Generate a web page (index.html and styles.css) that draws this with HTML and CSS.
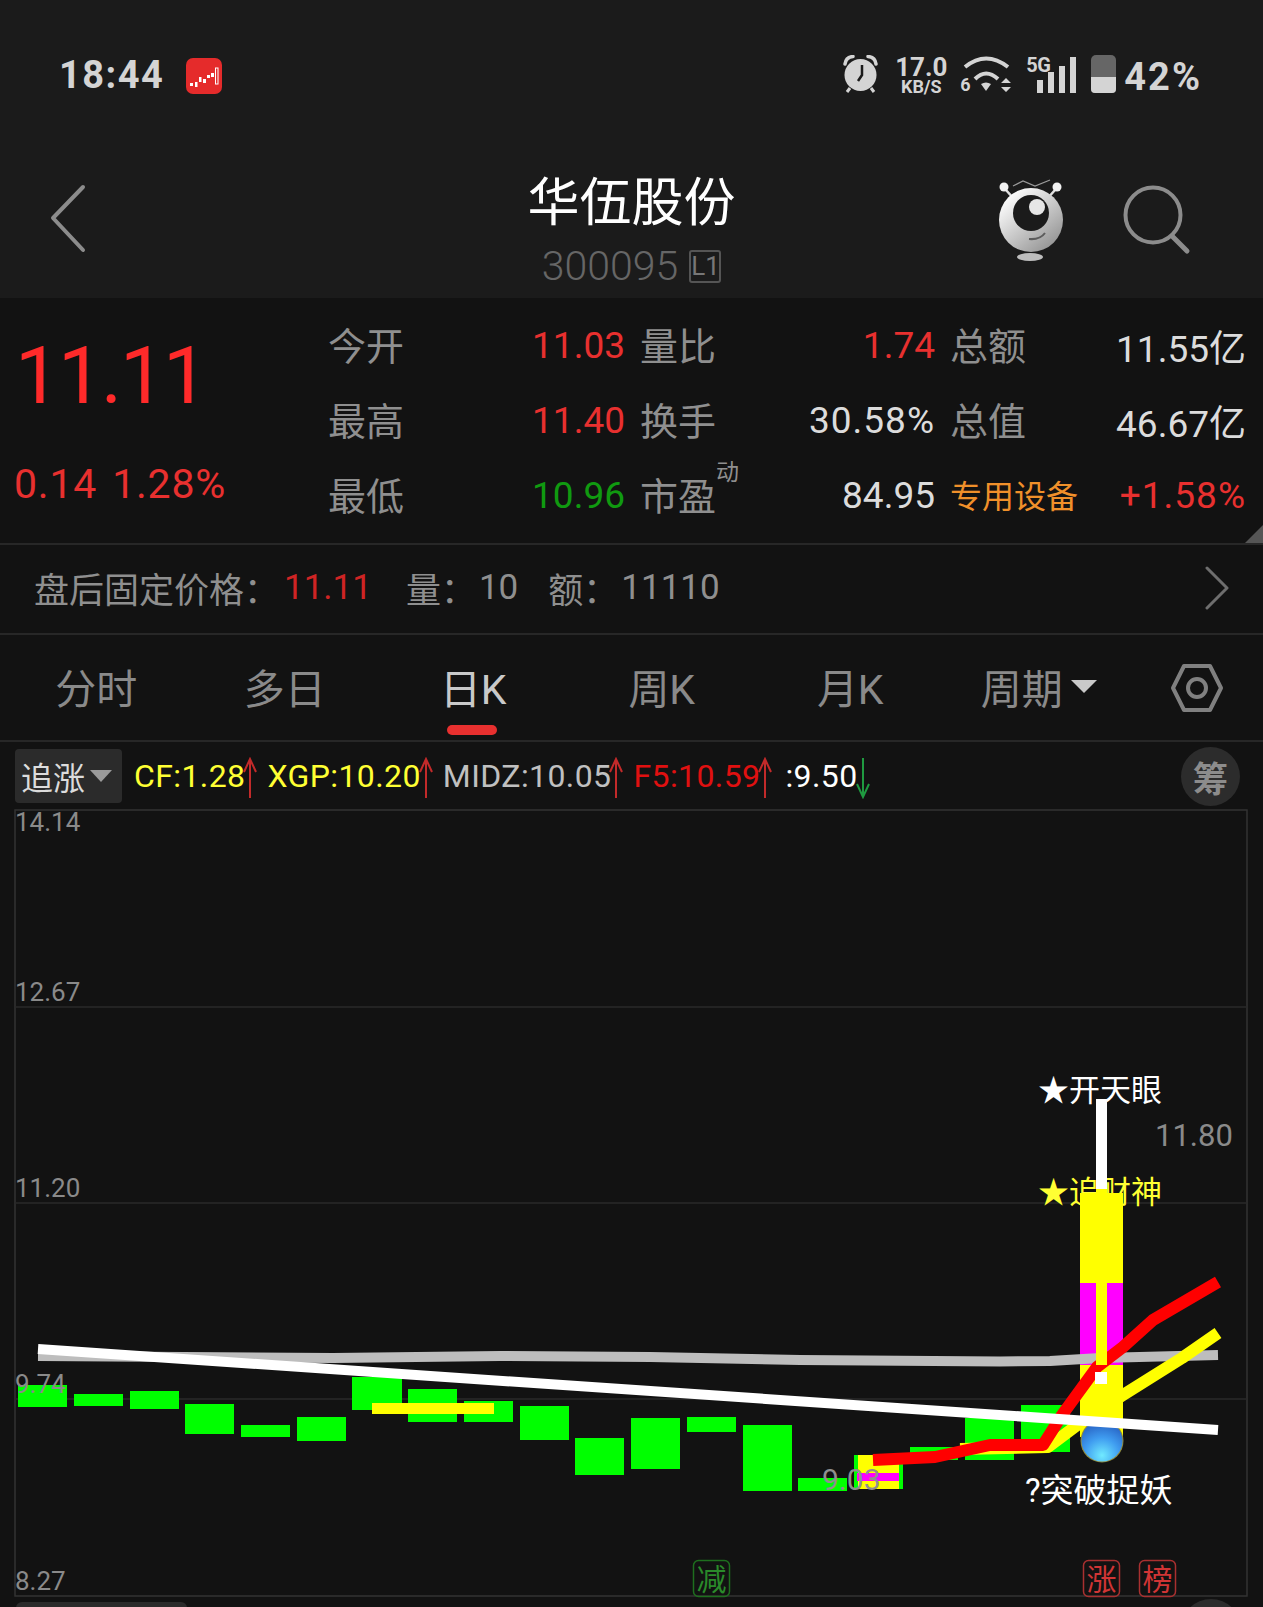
FILE: index.html
```html
<!DOCTYPE html>
<html lang="zh-CN">
<head>
  <meta charset="UTF-8">
  <title>华伍股份</title>
  <link rel="stylesheet" href="styles.css">
</head>
<body>

<header class="top">
  <div class="status">
    <div class="status-left">
      <span class="clock">18:44</span>
      <svg class="app-icon" width="36" height="36" viewBox="0 0 36 36">
        <rect width="36" height="36" rx="7" fill="#e52b2b"/>
        <g fill="#fff">
          <rect x="4" y="25" width="3" height="3"/>
          <rect x="9" y="24" width="2.5" height="5"/>
          <rect x="13" y="19" width="2.5" height="5"/>
          <rect x="17" y="21" width="3" height="4"/>
          <rect x="21" y="17" width="3" height="3"/>
          <rect x="25" y="15" width="3" height="4"/>
        </g>
        <rect x="29.5" y="10" width="2.5" height="16" fill="none" stroke="#fff" stroke-width="1"/>
      </svg>
    </div>
    <div class="status-right">
      <svg width="38" height="38" viewBox="0 0 38 38">
        <circle cx="18.500" cy="20" r="16" fill="#d4d4d4"/>
        <path d="M3 9 Q4 2 11 1.500 M34 9 Q33 2 26 1.500" fill="none" stroke="#d4d4d4" stroke-width="3.500" stroke-linecap="round"/>
        <path d="M8 33 L5 37 M29 33 L32 37" stroke="#d4d4d4" stroke-width="3"/>
        <path d="M20 10 V20 L16 26" fill="none" stroke="#1b1b1b" stroke-width="2.500"/>
      </svg>
      <div class="speed">
        <span class="speed-num">17.0</span>
        <span class="speed-unit">KB/S</span>
      </div>
      <div class="wifi">
        <svg width="54" height="38" viewBox="0 0 54 38">
          <path d="M6 12 Q27 -5 49 12" fill="none" stroke="#d4d4d4" stroke-width="4"/>
          <path d="M16 24 Q27 13 39 24" fill="none" stroke="#d4d4d4" stroke-width="4"/>
          <path d="M22 29 Q27 26 32 29 L27 36 Z" fill="#d4d4d4"/>
          <path d="M47 23 L52 28 H42 Z M42 32 H52 L47 37 Z" fill="#d4d4d4"/>
        </svg>
        <span class="wifi-gen">6</span>
      </div>
      <div class="signal">
        <span class="signal-gen">5G</span>
        <i class="bar bar-1"></i>
        <i class="bar bar-2"></i>
        <i class="bar bar-3"></i>
        <i class="bar bar-4"></i>
      </div>
      <div class="battery"><div class="battery-fill"></div></div>
      <span class="battery-pct">42%</span>
    </div>
  </div>

  <div class="nav">
    <svg class="back" width="40" height="70" viewBox="0 0 40 70">
      <path d="M34 3 L4 34 L34 66" fill="none" stroke="#8c8c8c" stroke-width="4" stroke-linecap="round" stroke-linejoin="round"/>
    </svg>
    <div class="title">
      <h1>华伍股份</h1>
      <div class="code"><span>300095</span><span class="level">L1</span></div>
    </div>
    <div class="nav-right">
      <svg width="70" height="84" viewBox="0 0 70 84">
        <defs>
          <linearGradient id="bot" x1="0.150" y1="0.100" x2="0.850" y2="0.950">
            <stop offset="0" stop-color="#ffffff"/>
            <stop offset="1" stop-color="#929292"/>
          </linearGradient>
        </defs>
        <path d="M11 12 L19 21 M60 12 L52 21" stroke="#e0e0e0" stroke-width="2.500"/>
        <circle cx="9" cy="9" r="4.500" fill="#f2f2f2"/>
        <circle cx="62" cy="9" r="4.500" fill="#f2f2f2"/>
        <path d="M18 8 L28 3 L40 8 L55 2" fill="none" stroke="#9a9a9a" stroke-width="1.300"/>
        <circle cx="36" cy="42" r="32" fill="url(#bot)"/>
        <circle cx="36" cy="35" r="18" fill="#1b1b1b"/>
        <circle cx="42" cy="29" r="8" fill="#e6e6e6"/>
        <path d="M34 61 Q45 62 50 55" fill="none" stroke="#5c5c5c" stroke-width="2"/>
        <ellipse cx="35" cy="79" rx="13" ry="4" fill="#bdbdbd"/>
      </svg>
      <svg class="search" width="70" height="76" viewBox="0 0 70 76">
        <circle cx="31" cy="31" r="27.500" fill="none" stroke="#8c8c8c" stroke-width="4"/>
        <path d="M50 52 L65 67" stroke="#8c8c8c" stroke-width="5" stroke-linecap="round"/>
      </svg>
    </div>
  </div>
</header>

<section class="quote">
  <div class="price">
    <div class="price-now">11.11</div>
    <div class="price-change"><span>0.14</span><span>1.28%</span></div>
  </div>
  <div class="stats">
    <div class="stat"><span class="lbl">今开</span><span class="up">11.03</span></div>
    <div class="stat"><span class="lbl">量比</span><span class="up">1.74</span></div>
    <div class="stat stat-last"><span class="lbl">总额</span><span class="val">11.55亿</span></div>
    <div class="stat"><span class="lbl">最高</span><span class="up">11.40</span></div>
    <div class="stat"><span class="lbl">换手</span><span class="val pct">30.58%</span></div>
    <div class="stat stat-last"><span class="lbl">总值</span><span class="val">46.67亿</span></div>
    <div class="stat"><span class="lbl">最低</span><span class="down">10.96</span></div>
    <div class="stat"><span class="lbl">市盈<sup class="dyn">动</sup></span><span class="val">84.95</span></div>
    <div class="stat stat-last"><span class="sector">专用设备</span><span class="up pct">+1.58%</span></div>
  </div>
  <div class="corner"></div>
</section>

<section class="after">
  <span class="after-lbl">盘后固定价格：</span><span class="after-price">11.11</span>
  <span class="after-lbl after-vol">量：</span><span class="after-num">10</span>
  <span class="after-lbl after-amt">额：</span><span class="after-num">11110</span>
  <svg class="after-go" width="26" height="44" viewBox="0 0 26 44">
    <path d="M3 2 L23 22 L3 42" fill="none" stroke="#6e6e6e" stroke-width="3" stroke-linecap="round" stroke-linejoin="round"/>
  </svg>
</section>

<nav class="tabs">
  <div class="tab">分时</div>
  <div class="tab">多日</div>
  <div class="tab active">日K</div>
  <div class="tab">周K</div>
  <div class="tab">月K</div>
  <div class="tab">周期<i class="caret"></i></div>
  <svg class="gear" width="54" height="50" viewBox="0 0 54 50">
    <path d="M14 3 H40 L51 25 L40 47 H14 L3 25 Z" fill="none" stroke="#808080" stroke-width="4" stroke-linejoin="round"/>
    <circle cx="27" cy="25" r="9" fill="none" stroke="#808080" stroke-width="4"/>
  </svg>
</nav>

<div class="indicators">
  <div class="picker">追涨<i class="picker-caret"></i></div>
  <span class="ind yellow">CF:1.28</span>
  <svg class="arrow" width="14" height="42" viewBox="0 0 14 42"><path d="M7 41 V2 M1 15 L7 2 L13 15" fill="none" stroke="#c22a2a" stroke-width="2"/></svg>
  <span class="ind yellow">XGP:10.20</span>
  <svg class="arrow" width="14" height="42" viewBox="0 0 14 42"><path d="M7 41 V2 M1 15 L7 2 L13 15" fill="none" stroke="#c22a2a" stroke-width="2"/></svg>
  <span class="ind silver">MIDZ:10.05</span>
  <svg class="arrow" width="14" height="42" viewBox="0 0 14 42"><path d="M7 41 V2 M1 15 L7 2 L13 15" fill="none" stroke="#c22a2a" stroke-width="2"/></svg>
  <span class="ind red">F5:10.59</span>
  <svg class="arrow" width="14" height="42" viewBox="0 0 14 42"><path d="M7 41 V2 M1 15 L7 2 L13 15" fill="none" stroke="#c22a2a" stroke-width="2"/></svg>
  <span class="ind white">:9.50</span>
  <svg class="arrow" width="14" height="42" viewBox="0 0 14 42"><path d="M7 1 V40 M1 27 L7 40 L13 27" fill="none" stroke="#1f9a40" stroke-width="2"/></svg>
  <div class="chips">筹</div>
</div>

<svg class="chart" width="1263" height="807" viewBox="0 800 1263 807">
  <defs>
    <radialGradient id="orb" cx="0.500" cy="0.850" r="0.850">
      <stop offset="0" stop-color="#70eaff"/>
      <stop offset="0.500" stop-color="#3f9cf0"/>
      <stop offset="0.900" stop-color="#2a68c8"/>
      <stop offset="1" stop-color="#1f4f98"/>
    </radialGradient>
  </defs>

  <!-- frame and price grid -->
  <rect class="frame" x="15" y="810" width="1232" height="786"/>
  <path class="grid" d="M15 1007 H1247 M15 1203 H1247 M15 1399 H1247"/>

  <!-- falling days -->
  <g class="candle">
    <rect x="18" y="1385" width="49" height="22"/>
    <rect x="74" y="1394" width="49" height="12"/>
    <rect x="130" y="1391" width="49" height="18"/>
    <rect x="185" y="1404" width="49" height="30"/>
    <rect x="241" y="1425" width="49" height="12"/>
    <rect x="297" y="1417" width="49" height="24"/>
    <rect x="352" y="1377" width="50" height="33"/>
    <rect x="408" y="1389" width="49" height="33"/>
    <rect x="464" y="1401" width="49" height="21"/>
    <rect x="520" y="1406" width="49" height="34"/>
    <rect x="575" y="1438" width="49" height="37"/>
    <rect x="631" y="1418" width="49" height="51"/>
    <rect x="687" y="1417" width="49" height="15"/>
    <rect x="743" y="1425" width="49" height="66"/>
    <rect x="798" y="1478" width="49" height="13"/>
    <rect x="854" y="1455" width="49" height="34"/>
    <rect x="910" y="1447" width="48" height="13"/>
    <rect x="965" y="1418" width="49" height="42"/>
    <rect x="1021" y="1405" width="49" height="47"/>
  </g>
  <rect class="fill-yellow" x="858" y="1455" width="41" height="34"/>
  <rect class="fill-pink" x="857" y="1473" width="42" height="8"/>
  <path class="seg-yellow" d="M372 1408.500 H494"/>

  <text class="tag tag-white" x="1038" y="1101">★开天眼</text>
  <text class="tag tag-yellow" x="1038" y="1203">★追财神</text>

  <!-- limit-up day -->
  <rect class="wick" x="1096" y="1099" width="11" height="90"/>
  <rect class="fill-yellow" x="1080" y="1193" width="43" height="244"/>
  <rect class="fill-pink" x="1080" y="1283" width="43" height="82"/>

  <polyline class="ma ma-gray" points="38,1356 333,1358 500,1356 650,1357 800,1360 1000,1361.500 1050,1361 1100,1358 1218,1355"/>
  <polyline class="ma ma-yellow" points="960,1449 1048,1447 1080,1423 1123,1395 1182,1358 1218,1333"/>
  <polyline class="ma ma-red" points="873,1460 935,1457 990,1445 1043,1445 1062,1415 1097,1367 1123,1347 1153,1320 1218,1282"/>

  <rect class="fill-yellow" x="1096" y="1189" width="11" height="176"/>
  <rect class="wick" x="1095" y="1372" width="12" height="12"/>

  <circle cx="1102" cy="1441" r="21.500" fill="#8f8a3c"/>
  <circle cx="1102" cy="1441" r="20.500" fill="url(#orb)"/>
  <line class="ma ma-white" x1="38" y1="1349" x2="1218" y2="1430"/>

  <!-- axis prices sit on top of the candles -->
  <text class="axis" x="15" y="831">14.14</text>
  <text class="axis" x="15" y="1001">12.67</text>
  <text class="axis" x="15" y="1197">11.20</text>
  <text class="axis" x="15" y="1393">9.74</text>
  <text class="axis" x="15" y="1590">8.27</text>
  <text class="axis axis-high" x="1155" y="1146">11.80</text>
  <text class="axis axis-low" x="822" y="1490">9.03</text>

  <text class="tag tag-wide" x="1025" y="1502">?突破捉妖</text>

  <g class="badge badge-green">
    <rect x="693.500" y="1560.500" width="36" height="36" rx="5"/>
    <text x="711.500" y="1590">减</text>
  </g>
  <g class="badge badge-red">
    <rect x="1083.500" y="1560.500" width="36" height="36" rx="5"/>
    <text x="1101.500" y="1590">涨</text>
  </g>
  <g class="badge badge-red">
    <rect x="1139.500" y="1560.500" width="36" height="36" rx="5"/>
    <text x="1157.500" y="1590">榜</text>
  </g>

  <!-- next strip starts below the fold -->
  <rect x="16" y="1602" width="171" height="30" rx="6" fill="#2b2b2b"/>
  <circle cx="1211" cy="1629" r="30" fill="#2c2c2c"/>
</svg>

</body>
</html>
```

FILE: styles.css
```css
:root {
  --bar: #1b1b1b;
  --bg: #121212;
  --line: #272727;
  --label: #8f8f8f;
  --value: #dcdcdc;
  --up: #e8302f;
  --down: #109a10;
}

* {
  margin: 0;
  padding: 0;
  box-sizing: border-box;
}

body {
  width: 1263px;
  height: 1607px;
  overflow: hidden;
  background: var(--bg);
  color: var(--value);
  font-family: Roboto, "Noto Sans CJK SC", sans-serif;
}

/* status bar + title bar */
.top {
  height: 298px;
  background: var(--bar);
}

.status {
  height: 130px;
  padding: 55px 61px 0 59px;
  display: flex;
  justify-content: space-between;
  align-items: flex-start;
  color: #d4d4d4;
}

.status-left {
  display: flex;
  align-items: center;
  gap: 22px;
}

.clock {
  font-size: 38px;
  font-weight: 700;
  line-height: 40px;
  letter-spacing: 1.5px;
}

.app-icon {
  margin-top: 2px;
}

.status-right {
  display: flex;
  align-items: flex-start;
}

.speed {
  margin-left: 15px;
  width: 52px;
  display: flex;
  flex-direction: column;
  align-items: center;
  font-weight: 700;
}

.speed-num {
  font-size: 26px;
  line-height: 24px;
}

.speed-unit {
  font-size: 18px;
  line-height: 15px;
}

.wifi {
  position: relative;
  margin-left: 12px;
  width: 54px;
}

.wifi-gen {
  position: absolute;
  left: 1px;
  top: 19px;
  font-size: 18px;
  font-weight: 700;
}

.signal {
  position: relative;
  margin-left: 13px;
  width: 50px;
  height: 38px;
  display: flex;
  align-items: flex-end;
  justify-content: flex-end;
  gap: 5px;
}

.signal-gen {
  position: absolute;
  left: 0;
  top: 0;
  font-size: 20px;
  line-height: 20px;
  font-weight: 700;
  letter-spacing: -0.5px;
}

.bar {
  width: 6px;
  background: #d4d4d4;
}

.bar-1 { height: 13px; }
.bar-2 { height: 21px; }
.bar-3 { height: 27px; }
.bar-4 { height: 36px; }

.battery {
  margin-left: 15px;
  width: 25px;
  height: 38px;
  background: #666;
  border-radius: 5px 5px 4px 4px;
  display: flex;
  align-items: flex-end;
  overflow: hidden;
}

.battery-fill {
  width: 100%;
  height: 16px;
  background: #d4d4d4;
}

.battery-pct {
  margin-left: 8px;
  margin-top: 2px;
  font-size: 38px;
  font-weight: 700;
  line-height: 40px;
  letter-spacing: 2px;
}

.nav {
  height: 168px;
  display: grid;
  grid-template-columns: 1fr auto 1fr;
  align-items: start;
}

.back {
  margin: 54px 0 0 49px;
}

.title {
  text-align: center;
}

.title h1 {
  font-size: 52px;
  font-weight: 400;
  line-height: 70px;
  margin-top: 39px;
  color: #fff;
}

.code {
  display: flex;
  justify-content: center;
  align-items: center;
  gap: 11px;
  font-size: 41px;
  line-height: 42px;
  font-weight: 300;
  color: #666;
  margin-top: 6px;
}

.level {
  width: 32px;
  height: 33px;
  border: 2px solid #555;
  border-radius: 3px;
  font-size: 26px;
  line-height: 29px;
  font-weight: 400;
  color: #777;
}

.nav-right {
  display: flex;
  justify-content: flex-end;
  align-items: flex-start;
  gap: 57px;
  padding-right: 71px;
  margin-top: 48px;
}

.search {
  margin-top: 6px;
}

/* quote block */
.quote {
  position: relative;
  height: 245px;
  display: flex;
}

.price {
  width: 328px;
  flex: none;
}

.price-now {
  font-size: 80px;
  line-height: 94px;
  margin: 31px 0 0 15px;
  letter-spacing: -2px;
  color: #ff2a2a;
}

.price-change {
  display: flex;
  gap: 15px;
  margin: 38px 0 0 14px;
  font-size: 41px;
  line-height: 46px;
  letter-spacing: 0.8px;
  color: var(--up);
}

.stats {
  flex: 1;
  padding-top: 8px;
  display: grid;
  grid-template-columns: 312px 310px 296px;
  grid-auto-rows: 75px;
  font-size: 37px;
}

.stat {
  display: flex;
  justify-content: space-between;
  align-items: center;
  padding-right: 15px;
}

.stat-last {
  padding-right: 0;
}

.lbl {
  font-size: 38px;
  color: var(--label);
  position: relative;
}

.dyn {
  position: absolute;
  left: 76px;
  top: -8px;
  font-size: 23px;
  line-height: 30px;
}

.val,
.up,
.down {
  padding-top: 4px;
}

.val {
  color: var(--value);
}

.up {
  color: var(--up);
}

.down {
  color: var(--down);
}

.pct {
  letter-spacing: 1px;
}

.sector {
  font-size: 32px;
  color: #f0902a;
}

/* fold marker on the right edge */
.corner {
  position: absolute;
  right: 0;
  bottom: 0;
  width: 0;
  height: 0;
  border-left: 18px solid transparent;
  border-bottom: 18px solid #555;
}

/* after-hours row */
.after {
  height: 90px;
  border-top: 2px solid var(--line);
  display: flex;
  align-items: center;
  padding: 0 0 3px 34px;
  font-size: 35px;
}

.after-lbl {
  color: var(--label);
}

.after-price {
  margin-left: 5px;
  color: #cf2424;
}

.after-num {
  margin-left: 3px;
  color: var(--label);
}

.after-vol {
  margin-left: 34px;
}

.after-amt {
  margin-left: 30px;
}

.after-go {
  margin-left: auto;
  margin-right: 33px;
}

/* period tabs */
.tabs {
  height: 109px;
  border-top: 2px solid var(--line);
  border-bottom: 2px solid var(--line);
  display: flex;
  align-items: center;
  padding-left: 2px;
}

.tab {
  position: relative;
  width: 188.5px;
  height: 100%;
  padding-bottom: 3px;
  display: flex;
  align-items: center;
  justify-content: center;
  font-size: 41px;
  color: #8a8a8a;
}

.tab.active {
  color: #c9c9c9;
}

.tab.active::after {
  content: "";
  position: absolute;
  left: 50%;
  bottom: 5px;
  width: 50px;
  height: 10px;
  margin-left: -26px;
  border-radius: 5px;
  background: var(--up);
}

.caret {
  margin-left: 8px;
  border-left: 13px solid transparent;
  border-right: 13px solid transparent;
  border-top: 13px solid #c9c9c9;
}

.gear {
  margin-left: 37px;
}

/* indicator values */
.indicators {
  height: 68px;
  display: flex;
  align-items: center;
  padding-left: 15px;
  font-size: 32px;
  letter-spacing: 0.4px;
}

.picker {
  width: 107px;
  height: 54px;
  flex: none;
  display: flex;
  align-items: center;
  padding-left: 6px;
  margin-right: 12px;
  background: #2b2b2b;
  border-radius: 4px;
  font-size: 32px;
  letter-spacing: 0;
  color: var(--value);
}

.picker-caret {
  margin-left: 5px;
  border-left: 11px solid transparent;
  border-right: 11px solid transparent;
  border-top: 12px solid #9a9a9a;
}

.arrow {
  margin: 4px 10px 0 -2px;
}

.ind {
  white-space: nowrap;
}

.yellow { color: #ffff33; }
.silver { color: #c0c0c0; }
.red { color: #e01010; }

.white {
  margin-left: 3px;
  color: #fff;
}

.chips {
  margin-left: auto;
  margin-right: 23px;
  width: 59px;
  height: 59px;
  border-radius: 50%;
  background: #2c2c2c;
  display: flex;
  align-items: center;
  justify-content: center;
  font-size: 35px;
  font-weight: 700;
  letter-spacing: 0;
  color: #8c8c8c;
}

/* kline canvas, drawn in page coordinates; the top 10px runs up behind the indicator row */
.chart {
  display: block;
  margin-top: -10px;
}

.frame {
  fill: none;
  stroke: #333;
  stroke-width: 1.500;
}

.grid {
  fill: none;
  stroke: #2a2a2a;
  stroke-width: 1.500;
}

.candle {
  fill: #00ff00;
}

.fill-yellow {
  fill: #ffff00;
}

.fill-pink {
  fill: #ff00ff;
}

.wick {
  fill: #fff;
}

.seg-yellow {
  stroke: #ffff00;
  stroke-width: 11;
}

.ma {
  fill: none;
  stroke-width: 10;
  stroke-linejoin: round;
}

.ma-gray { stroke: #bdbdbd; }
.ma-yellow { stroke: #ffff00; stroke-width: 12; }
.ma-red { stroke: #ff0000; stroke-width: 12; }
.ma-white { stroke: #fff; }

.axis {
  font-size: 26px;
  fill: #8a8a8a;
}

.axis-high {
  font-size: 31px;
}

.axis-low {
  font-size: 30px;
  fill: #8f8f8f;
}

.tag {
  font-size: 31px;
}

.tag-white { fill: #fff; }
.tag-yellow { fill: #ffff33; }

.tag-wide {
  font-size: 33px;
  fill: #fff;
}

.badge rect {
  fill: none;
  stroke-width: 1.500;
}

.badge text {
  font-size: 30px;
  text-anchor: middle;
}

.badge-green rect { stroke: #1e6e1e; }
.badge-green text { fill: #2a8a2a; }
.badge-red rect { stroke: #a83030; }
.badge-red text { fill: #d03535; }
```
